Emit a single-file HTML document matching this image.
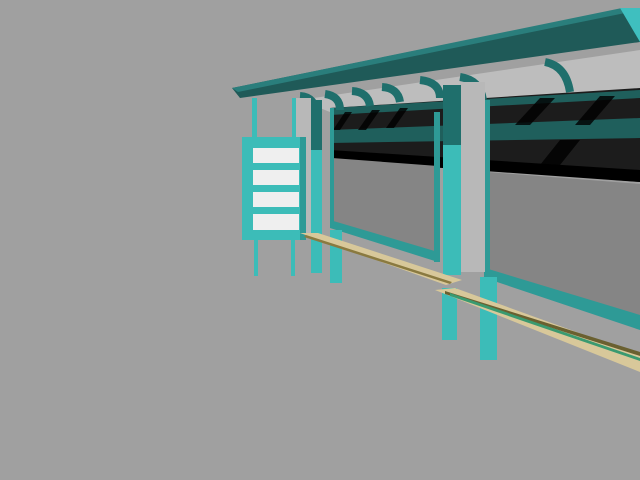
<!DOCTYPE html>
<html><head><style>html,body{margin:0;padding:0;background:#a0a0a0;width:640px;height:480px;overflow:hidden}</style></head>
<body>
<svg width="640" height="480" viewBox="0 0 640 480" xmlns="http://www.w3.org/2000/svg">
<rect width="640" height="480" fill="#a0a0a0"/>
<polygon points="300,100 640,50 640,95 330,112" fill="#bdbdbd"/>
<polygon points="330,108 640,88 640,182 487,170 438,165 330,158" fill="#1c1c1c"/>
<polygon points="330,130 640,118 640,138 330,143" fill="#1f5f5c"/>
<polygon points="330,108 640,90 640,98 330,115" fill="#1f5f5c"/>
<polygon points="330,150 640,170 640,182 330,160" fill="#000"/>
<g fill="#000" opacity="0.8">
<polygon points="345,112 352,112 340,130 333,130"/><polygon points="372,110 380,110 366,130 358,130"/>
<polygon points="400,108 408,108 394,128 386,128"/><polygon points="540,98 555,98 530,125 515,125"/>
<polygon points="600,96 615,96 590,125 575,125"/><polygon points="560,140 580,140 560,165 540,165"/>
</g>
<polygon points="332,158 438,166 438,257 332,222" fill="#858585"/>
<polygon points="487,172 640,184 640,318 487,270" fill="#858585"/>
<polygon points="330,220 438,252 438,262 330,228" fill="#2e9a96"/>
<polygon points="485,268 640,315 640,330 485,278" fill="#2e9a96"/>
<rect x="330" y="108" width="4" height="120" fill="#2e9a96"/>
<rect x="434" y="112" width="6" height="150" fill="#2e9a96"/>
<rect x="484" y="100" width="6" height="180" fill="#2e9a96"/>
<g fill="none" stroke="#1f6f6c" stroke-width="8">
<path d="M316,270 L316,115 Q316,97 300,96"/>
<path d="M340,110 Q340,96 325,94"/>
<path d="M370,106 Q368,92 352,91"/>
<path d="M400,102 Q398,88 382,87"/>
<path d="M440,98 Q440,82 420,80"/>
<path d="M483,100 Q480,80 460,77"/>
<path d="M570,92 Q566,66 545,62"/>
</g>
<rect x="293" y="98" width="18" height="135" fill="#b8b8b8"/>
<rect x="311" y="100" width="11" height="173" fill="#3cbcb8"/>
<rect x="460" y="82" width="25" height="190" fill="#b8b8b8"/>
<rect x="443" y="85" width="18" height="190" fill="#3cbcb8"/>
<rect x="443" y="85" width="18" height="60" fill="#1f6f6c"/>
<rect x="311" y="100" width="11" height="50" fill="#1f6f6c"/>
<rect x="330" y="230" width="12" height="53" fill="#3cbcb8"/>
<rect x="442" y="288" width="15" height="52" fill="#3cbcb8"/>
<rect x="480" y="277" width="17" height="83" fill="#3cbcb8"/>
<rect x="252" y="98" width="5" height="40" fill="#3cbcb8"/>
<rect x="292" y="98" width="4" height="40" fill="#3cbcb8"/>
<rect x="254" y="240" width="4" height="36" fill="#3cbcb8"/>
<rect x="291" y="240" width="4" height="36" fill="#3cbcb8"/>
<polygon points="232,88 625,8 640,8 640,42 240,98" fill="#1f5a58"/>
<polygon points="232,88 622,8 630,12 238,92" fill="#2a7e7c"/>
<polygon points="620,8 640,8 640,42" fill="#3fbfbf"/>
<rect x="242" y="137" width="64" height="103" fill="#3cbcb8"/>
<rect x="300" y="137" width="6" height="103" fill="#2e9a96"/>
<rect x="253" y="148" width="46" height="15" fill="#efefef"/>
<rect x="253" y="170" width="46" height="15" fill="#efefef"/>
<rect x="253" y="192" width="46" height="15" fill="#efefef"/>
<rect x="253" y="214" width="46" height="16" fill="#efefef"/>
<polygon points="300,233 318,233 462,280 446,285" fill="#d8c89a"/>
<polygon points="306,235 452,282 450,284 304,237" fill="#8a7a40"/>
<polygon points="435,290 455,288 640,355 640,372" fill="#d8c89a"/>
<polygon points="445,291 640,352 640,356 445,294" fill="#6a6030"/>
<polygon points="450,293 640,358 640,361 450,296" fill="#3a9a70"/>
</svg>
</body></html>
